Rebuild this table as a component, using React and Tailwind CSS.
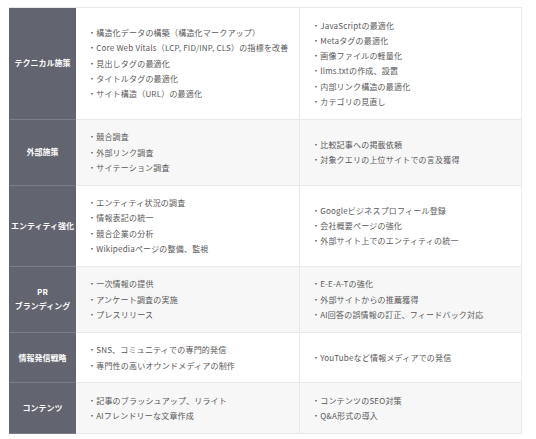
import React from "react";

const rows = [
  {
    title: ["テクニカル施策"],
    left: [
      "構造化データの構築（構造化マークアップ）",
      "Core Web Vitals（LCP, FID/INP, CLS）の指標を改善",
      "見出しタグの最適化",
      "タイトルタグの最適化",
      "サイト構造（URL）の最適化",
    ],
    right: [
      "JavaScriptの最適化",
      "Metaタグの最適化",
      "画像ファイルの軽量化",
      "llms.txtの作成、設置",
      "内部リンク構造の最適化",
      "カテゴリの見直し",
    ],
  },
  {
    title: ["外部施策"],
    left: ["競合調査", "外部リンク調査", "サイテーション調査"],
    right: ["比較記事への掲載依頼", "対象クエリの上位サイトでの言及獲得"],
  },
  {
    title: ["エンティティ強化"],
    left: ["エンティティ状況の調査", "情報表記の統一", "競合企業の分析", "Wikipediaページの整備、監視"],
    right: ["Googleビジネスプロフィール登録", "会社概要ページの強化", "外部サイト上でのエンティティの統一"],
  },
  {
    title: ["PR", "ブランディング"],
    left: ["一次情報の提供", "アンケート調査の実施", "プレスリリース"],
    right: ["E-E-A-Tの強化", "外部サイトからの推薦獲得", "AI回答の誤情報の訂正、フィードバック対応"],
  },
  {
    title: ["情報発信戦略"],
    left: ["SNS、コミュニティでの専門的発信", "専門性の高いオウンドメディアの制作"],
    right: ["YouTubeなど情報メディアでの発信"],
  },
  {
    title: ["コンテンツ"],
    left: ["記事のブラッシュアップ、リライト", "AIフレンドリーな文章作成"],
    right: ["コンテンツのSEO対策", "Q&A形式の導入"],
  },
];

const Cell = ({ items, gray, last }) => (
  <div
    className={`flex flex-col justify-center px-[12px] py-[9.5px] border-b border-[#e9e9e9] ${
      gray ? "bg-[#f7f7f7]" : "bg-white"
    } ${last ? "" : "border-r"}`}
  >
    {items.map((t) => (
      <p key={t} className="text-[8px] leading-[15.3px] tracking-[0.2px] text-[#585858] whitespace-nowrap">
        ・{t}
      </p>
    ))}
  </div>
);

export default function App() {
  return (
    <div
      className="w-[536px] h-[439px] bg-white pt-[7px] pl-[9px]"
      style={{ fontFamily: '"Noto Sans CJK JP", "Noto Sans", sans-serif' }}
    >
      <div className="w-[513px] grid grid-cols-[67px_224px_1fr] border-t border-[#e9e9e9] border-r">
        {rows.map((row, i) => (
          <React.Fragment key={row.title.join("")}>
            <div className="bg-[#62646f] flex flex-col items-center justify-center border-b border-[#7b7d87] text-white font-bold text-[8px] leading-[14px] text-center">
              {row.title.map((t) => (
                <span key={t}>{t}</span>
              ))}
            </div>
            <Cell items={row.left} gray={i % 2 === 1} />
            <Cell items={row.right} gray={i % 2 === 1} last />
          </React.Fragment>
        ))}
      </div>
    </div>
  );
}
